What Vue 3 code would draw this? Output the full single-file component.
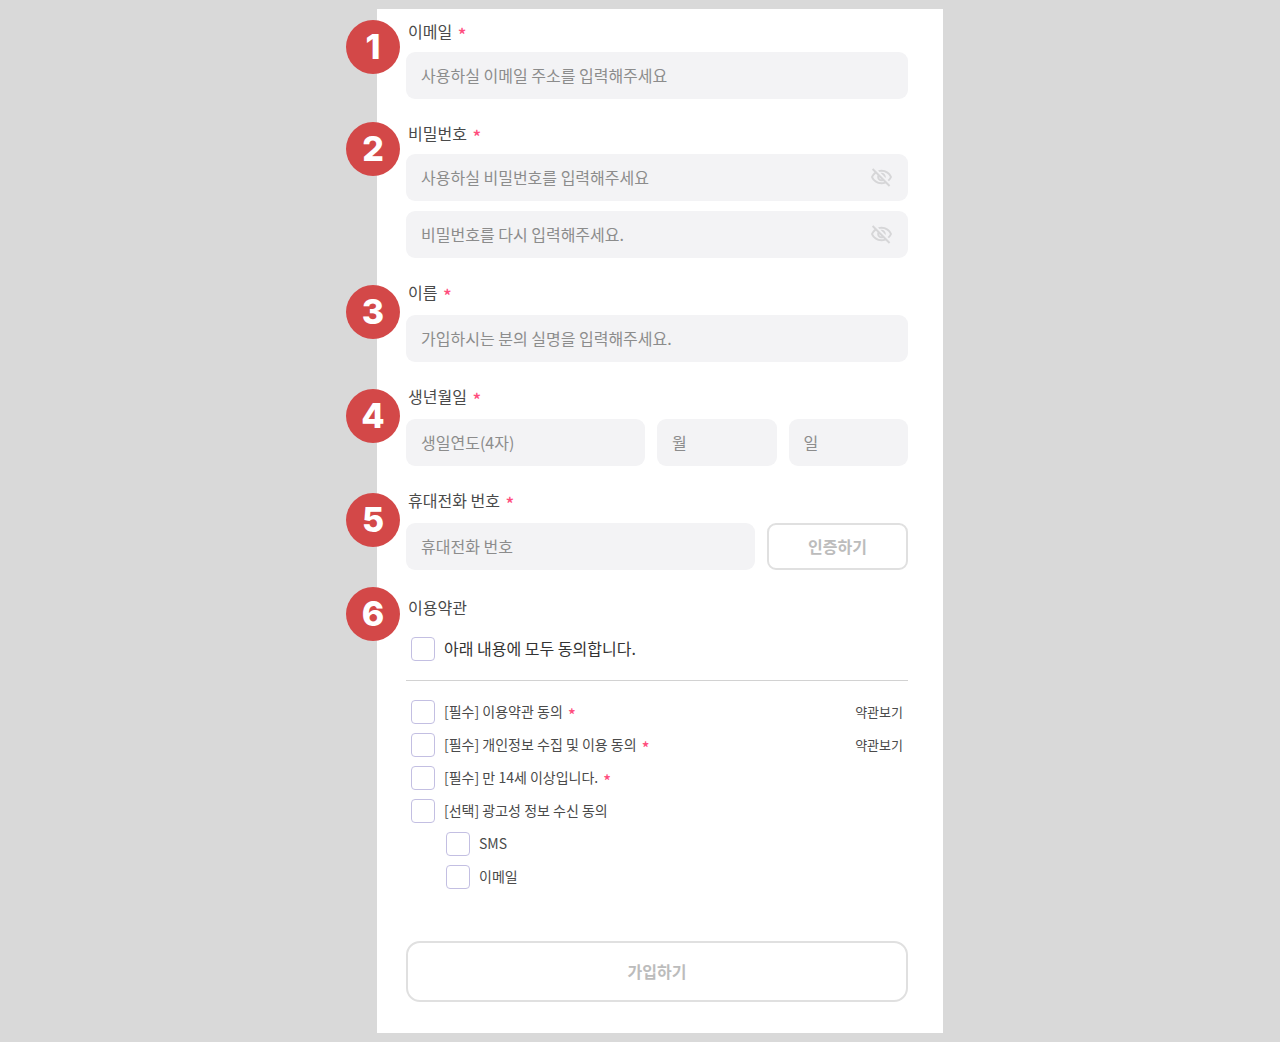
<script setup>
import { reactive, ref } from 'vue'

const eyeOff =
  'M12 6c3.79 0 7.17 2.13 8.82 5.5-.59 1.22-1.42 2.27-2.41 3.12l1.41 1.41c1.39-1.23 2.49-2.77 3.18-4.53C21.27 7.11 17 4 12 4c-1.27 0-2.49.2-3.64.57l1.65 1.65C10.66 6.09 11.32 6 12 6zm-1.07 1.14L13 9.21c.57.25 1.03.71 1.28 1.28l2.07 2.07c.08-.34.14-.7.14-1.07C16.5 9.01 14.48 7 12 7c-.37 0-.72.05-1.07.14zM2.01 3.87l2.68 2.68C3.06 7.83 1.77 9.53 1 11.5 2.73 15.89 7 19 12 19c1.52 0 2.98-.29 4.32-.82l3.42 3.42 1.41-1.41L3.42 2.45 2.01 3.87zm7.5 7.5l2.61 2.61c-.04.01-.08.02-.12.02-1.38 0-2.5-1.12-2.5-2.5 0-.05.01-.08.01-.13zm-3.4-3.4l1.75 1.75c-.23.55-.36 1.15-.36 1.78 0 2.48 2.02 4.5 4.5 4.5.63 0 1.23-.13 1.77-.36l.98.98c-.88.24-1.8.38-2.75.38-3.79 0-7.17-2.13-8.82-5.5.7-1.43 1.72-2.61 2.93-3.53z'

const form = reactive({
  email: '',
  password: '',
  confirm: '',
  name: '',
  year: '',
  month: '',
  day: '',
  phone: '',
})

const passwords = reactive([
  { key: 'password', label: '비밀번호', hint: '사용하실 비밀번호를 입력해주세요', shown: false },
  { key: 'confirm', label: '비밀번호 확인', hint: '비밀번호를 다시 입력해주세요.', shown: false },
])

const terms = reactive([
  { id: 'service', text: '[필수] 이용약관 동의', required: true, link: true, checked: false },
  { id: 'privacy', text: '[필수] 개인정보 수집 및 이용 동의', required: true, link: true, checked: false },
  { id: 'age', text: '[필수] 만 14세 이상입니다.', required: true, checked: false },
  { id: 'ads', text: '[선택] 광고성 정보 수신 동의', checked: false },
  { id: 'sms', text: 'SMS', nested: true, checked: false },
  { id: 'mail', text: '이메일', nested: true, checked: false },
])

const all = ref(false)
function toggleAll() {
  terms.forEach((t) => (t.checked = all.value))
}
</script>

<template>
  <main class="page">
    <form class="card" @submit.prevent>
      <section class="group">
        <span class="badge">1</span>
        <label class="title" for="email">이메일 <span class="star">*</span></label>
        <input id="email" v-model="form.email" class="field" type="email" placeholder="사용하실 이메일 주소를 입력해주세요" />
      </section>

      <section class="group">
        <span class="badge">2</span>
        <label class="title" for="password">비밀번호 <span class="star">*</span></label>
        <div class="stack">
          <div v-for="p in passwords" :key="p.key" class="secret">
            <input
              :id="p.key"
              v-model="form[p.key]"
              class="field"
              :type="p.shown ? 'text' : 'password'"
              :placeholder="p.hint"
              :aria-label="p.label"
            />
            <button class="eye" type="button" aria-label="비밀번호 표시" @click="p.shown = !p.shown">
              <svg viewBox="0 0 24 24" aria-hidden="true"><path :d="eyeOff" /></svg>
            </button>
          </div>
        </div>
      </section>

      <section class="group roomy">
        <span class="badge">3</span>
        <label class="title" for="name">이름 <span class="star">*</span></label>
        <input id="name" v-model="form.name" class="field" type="text" placeholder="가입하시는 분의 실명을 입력해주세요." />
      </section>

      <section class="group roomy">
        <span class="badge">4</span>
        <label class="title" for="year">생년월일 <span class="star">*</span></label>
        <div class="birth">
          <input id="year" v-model="form.year" class="field" type="text" placeholder="생일연도(4자)" />
          <input v-model="form.month" class="field" type="text" placeholder="월" aria-label="월" />
          <input v-model="form.day" class="field" type="text" placeholder="일" aria-label="일" />
        </div>
      </section>

      <section class="group roomy">
        <span class="badge">5</span>
        <label class="title" for="phone">휴대전화 번호 <span class="star">*</span></label>
        <div class="phone">
          <input id="phone" v-model="form.phone" class="field" type="tel" placeholder="휴대전화 번호" />
          <button class="verify" type="button">인증하기</button>
        </div>
      </section>

      <section class="group terms">
        <span class="badge">6</span>
        <h2 class="title">이용약관</h2>
        <div class="row agree-all">
          <input id="all" v-model="all" class="check" type="checkbox" @change="toggleAll" />
          <label for="all">아래 내용에 모두 동의합니다.</label>
        </div>
        <ul class="list">
          <li v-for="t in terms" :key="t.id" class="row" :class="{ nested: t.nested }">
            <input :id="t.id" v-model="t.checked" class="check" type="checkbox" />
            <label :for="t.id">{{ t.text }} <span v-if="t.required" class="star">*</span></label>
            <a v-if="t.link" class="view" href="#">약관보기</a>
          </li>
        </ul>
      </section>

      <button class="submit" type="submit">가입하기</button>
    </form>
  </main>
</template>

<style>
body {
  margin: 0;
  background: #d9d9d9;
}
</style>

<style scoped>
.page {
  box-sizing: border-box;
  padding: 9px 0 9px 40px;
  font-family: "Noto Sans CJK KR", sans-serif;
  font-size: 16px;
  color: #4a4a4a;
}

.card {
  box-sizing: border-box;
  display: flex;
  flex-direction: column;
  gap: 23px;
  max-width: 566px;
  margin: 0 auto;
  padding: 11px 35px 31px 29px;
  background: #fff;
}

.group {
  position: relative;
  display: flex;
  flex-direction: column;
  gap: 10px;
}

.roomy {
  gap: 12px;
}

.badge {
  position: absolute;
  top: 0;
  left: -60px;
  width: 54px;
  height: 54px;
  border-radius: 50%;
  background: #d34848;
  color: #fff;
  font: 800 34px/54px Inter, sans-serif;
  text-align: center;
}

.roomy .badge {
  top: 4px;
}

.terms .badge {
  top: -6px;
}

.title {
  margin: 0;
  padding-left: 2px;
  font-size: 16px;
  font-weight: 400;
  line-height: 22px;
}

.star {
  margin-left: 2px;
  color: #ff4d7d;
  font-size: 18px;
  font-weight: 500;
  line-height: 0;
  vertical-align: -4px;
}

.field {
  box-sizing: border-box;
  width: 100%;
  min-width: 0;
  height: 47px;
  padding: 0 15px 2px;
  border: 0;
  border-radius: 9px;
  background: #f3f3f5;
  color: #4a4a4a;
  font: inherit;
}

.field::placeholder {
  color: #8c8c8c;
  opacity: 1;
}

.stack {
  display: flex;
  flex-direction: column;
  gap: 10px;
}

.secret {
  position: relative;
  display: flex;
}

.secret .field {
  padding-right: 48px;
}

.eye {
  position: absolute;
  top: 0;
  right: 15px;
  display: flex;
  align-items: center;
  height: 46px;
  padding: 0;
  border: 0;
  background: none;
}

.eye svg {
  width: 23px;
  height: 23px;
  fill: #d6d6d8;
}

.birth {
  display: grid;
  grid-template-columns: 2fr 1fr 1fr;
  gap: 12px;
}

.phone {
  display: flex;
  gap: 12px;
}

.verify,
.submit {
  padding: 0 0 2px;
  border: 2px solid #e0e0e0;
  background: #fff;
  color: #bcbcbc;
  font: inherit;
  font-weight: 700;
}

.verify {
  flex: 0 0 141px;
  border-radius: 9px;
}

.submit {
  height: 61px;
  margin-top: 29px;
  border-radius: 14px;
}

.terms {
  gap: 19px;
  padding-top: 3px;
}

.row {
  display: flex;
  align-items: center;
  gap: 9px;
  height: 24px;
  padding: 0 5px;
}

.row label,
.view {
  padding-bottom: 2px;
}

.agree-all {
  color: #333;
}

.check {
  appearance: none;
  flex: none;
  width: 24px;
  height: 24px;
  margin: 0;
  border: 1px solid #c3bfe2;
  border-radius: 4px;
  background: #fff;
}

.check:checked {
  background: #c3bfe2;
}

.list {
  display: flex;
  flex-direction: column;
  gap: 9px;
  margin: 0;
  padding: 19px 0 0;
  border-top: 1px solid #d2d2d2;
  list-style: none;
  font-size: 14px;
}

.list .star {
  font-size: 16px;
}

.nested {
  padding-left: 40px;
}

.view {
  margin-left: auto;
  color: inherit;
  font-size: 13px;
  text-decoration: none;
}
</style>
